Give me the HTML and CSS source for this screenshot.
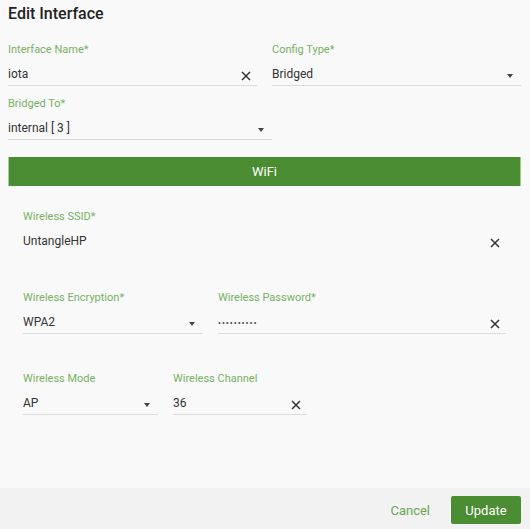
FILE: index.html
```html
<!DOCTYPE html>
<html>
<head>
<meta charset="utf-8">
<link rel="stylesheet" href="styles.css">
</head>
<body>
<div class="content">
  <h1 class="title">Edit Interface</h1>

  <div class="row first">
    <div class="field w249">
      <div class="label">Interface Name*</div>
      <div class="input"><span class="val">iota</span>
        <svg class="clear" viewBox="0 0 10 10"><path d="M1 1L9 9M9 1L1 9"/></svg></div>
    </div>
    <div class="field w249">
      <div class="label">Config Type*</div>
      <div class="input"><span class="val">Bridged</span><span class="arrow"></span></div>
    </div>
  </div>

  <div class="row gap11">
    <div class="field w264">
      <div class="label">Bridged To*</div>
      <div class="input"><span class="val">internal [ 3 ]</span><span class="arrow"></span></div>
    </div>
  </div>

  <div class="bar">WiFi</div>

  <div class="wifi">
    <div class="row">
      <div class="field w483">
        <div class="label">Wireless SSID*</div>
        <div class="input noline"><span class="val">UntangleHP</span>
          <svg class="clear" viewBox="0 0 10 10"><path d="M1 1L9 9M9 1L1 9"/></svg></div>
      </div>
    </div>
    <div class="row gap-a">
      <div class="field w180">
        <div class="label">Wireless Encryption*</div>
        <div class="input"><span class="val">WPA2</span><span class="arrow"></span></div>
      </div>
      <div class="field w288">
        <div class="label">Wireless Password*</div>
        <div class="input"><span class="val pwd">••••••••••</span>
          <svg class="clear" viewBox="0 0 10 10"><path d="M1 1L9 9M9 1L1 9"/></svg></div>
      </div>
    </div>
    <div class="row gap-b">
      <div class="field w135">
        <div class="label">Wireless Mode</div>
        <div class="input"><span class="val">AP</span><span class="arrow"></span></div>
      </div>
      <div class="field w134">
        <div class="label">Wireless Channel</div>
        <div class="input"><span class="val">36</span>
          <svg class="clear" viewBox="0 0 10 10"><path d="M1 1L9 9M9 1L1 9"/></svg></div>
      </div>
    </div>
  </div>
</div>

<div class="footer">
  <button class="btn cancel">Cancel</button>
  <button class="btn update">Update</button>
</div>
</body>
</html>
```
FILE: styles.css
```css
html, body {
  margin: 0;
  padding: 0;
}
body {
  background: #f9f9f9;
  font-family: Roboto, "Liberation Sans", sans-serif;
  color: #333;
  height: 529px;
  display: flex;
  flex-direction: column;
  overflow: hidden;
}
.content {
  flex: 1;
  padding: 4px 9px 0 8px;
}
.title {
  margin: 0;
  font-size: 16px;
  line-height: 20px;
  font-weight: 500;
  color: #222;
}
.row {
  display: flex;
  gap: 15px;
}
.row.first { margin-top: 19px; }
.row.gap11 { margin-top: 11px; }
.row.gap-a { margin-top: 38px; }
.row.gap-b { margin-top: 38px; }
.field { display: flex; flex-direction: column; }
.w249 { width: 249px; }
.w264 { width: 264px; }
.w483 { width: 483px; }
.w180 { width: 180px; }
.w288 { width: 288px; }
.w135 { width: 135px; }
.w134 { width: 134px; }
.label {
  font-size: 11px;
  line-height: 14px;
  color: #76b262;
}
.input {
  margin-top: 9px;
  display: flex;
  align-items: flex-start;
  height: 16px;
  padding-bottom: 3px;
  border-bottom: 1px solid #dcdcdc;
}
.input.noline { border-bottom-color: transparent; }
.val {
  flex: 1;
  font-size: 12px;
  line-height: 16px;
  color: #333;
}
.val.pwd {
  font-size: 9px;
  letter-spacing: 0.9px;
  line-height: 14px;
  padding-top: 2px;
  color: #444;
}
.clear {
  width: 10px;
  height: 10px;
  margin-top: 5px;
  margin-right: 6px;
  fill: none;
  stroke: #333;
  stroke-width: 1.5;
}
.arrow {
  width: 0;
  height: 0;
  margin-top: 8px;
  margin-right: 8px;
  border-left: 3.5px solid transparent;
  border-right: 3.5px solid transparent;
  border-top: 4px solid #444;
}
.bar {
  margin-top: 17px;
  height: 29px;
  line-height: 29px;
  background: #4a8c31;
  border-left: 1px solid #a3cc95;
  border-right: 1px solid #a3cc95;
  color: #fff;
  text-align: center;
  font-size: 13px;
}
.wifi {
  padding-left: 15px;
  margin-top: 24px;
}
.footer {
  height: 41px;
  background: #f2f2f2;
  display: flex;
  justify-content: flex-end;
  align-items: flex-start;
  padding: 8px 9px 0 0;
  box-sizing: border-box;
}
.btn {
  font-family: Roboto, "Liberation Sans", sans-serif;
  font-size: 13px;
  height: 28px;
  border: none;
  background: none;
  padding: 0 11px;
  cursor: pointer;
}
.cancel {
  color: #66a851;
  margin-right: 10px;
}
.update {
  width: 70px;
  padding: 0;
  background: #4b8d32;
  color: #fff;
  border-radius: 2px;
}
```
